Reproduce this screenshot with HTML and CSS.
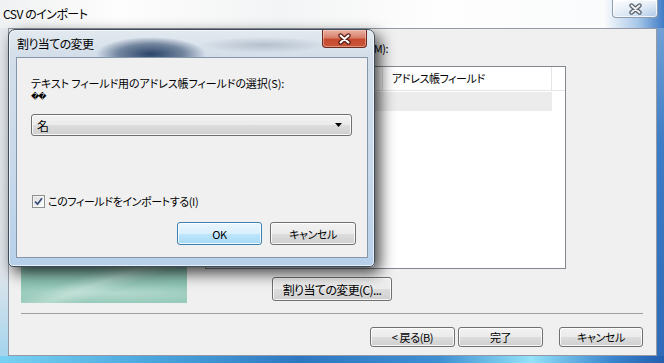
FILE: index.html
```html
<!DOCTYPE html>
<html lang="ja">
<head>
    <meta charset="UTF-8">
    <meta name="viewport" content="width=device-width, initial-scale=1.0">
    <title>CSV のインポート</title>
    <link rel="stylesheet" href="styles.css">
</head>
<body>
    <div class="window">
        <div class="titlebar">
            <span class="title">CSV のインポート</span>
            <div class="caption-close">
                <svg width="15" height="12" viewBox="0 0 15 12">
                    <path d="M3.5 2.5L11.5 9.5M11.5 2.5L3.5 9.5" stroke="#59606a" stroke-width="4.4" stroke-linecap="round"/>
                    <path d="M3.5 2.5L11.5 9.5M11.5 2.5L3.5 9.5" stroke="#eef0f2" stroke-width="2" stroke-linecap="round"/>
                </svg>
            </div>
        </div>

        <div class="client">
            <div class="wizard-body">
                <div class="side-art"></div>
                <div class="map-pane">
                    <div class="map-label">テキスト フィールドの割り当ての設定(M):</div>
                    <div class="listview">
                        <div class="lv-header">
                            <div class="lv-col col-text"></div>
                            <div class="lv-col col-field">アドレス帳フィールド</div>
                            <div class="lv-col col-fill"></div>
                        </div>
                        <div class="lv-row selected">
                            <div class="lv-cell col-text"></div>
                            <div class="lv-cell col-field"></div>
                        </div>
                    </div>
                    <div class="map-actions">
                        <button class="btn map-btn">割り当ての変更(C)...</button>
                    </div>
                </div>
            </div>

            <div class="separator"></div>

            <div class="wizard-buttons">
                <button class="btn wiz">&lt; 戻る(B)</button>
                <button class="btn wiz">完了</button>
                <button class="btn wiz cancel">キャンセル</button>
            </div>
        </div>

        <!-- modal dialog on top of the wizard -->
        <div class="dialog">
            <div class="dialog-titlebar">
                <span class="dialog-title">割り当ての変更</span>
                <div class="dialog-close">
                    <svg width="15" height="12" viewBox="0 0 15 12">
                        <path d="M3.5 2.5L11.5 9.5M11.5 2.5L3.5 9.5" stroke="#5a1c12" stroke-width="4.4" stroke-linecap="round"/>
                        <path d="M3.5 2.5L11.5 9.5M11.5 2.5L3.5 9.5" stroke="#ffffff" stroke-width="2" stroke-linecap="round"/>
                    </svg>
                </div>
            </div>
            <div class="dialog-client">
                <div class="prompt">テキスト フィールド用のアドレス帳フィールドの選択(S):</div>
                <div class="source-name">��</div>
                <div class="combo">
                    <span>名</span>
                    <svg width="7" height="4" viewBox="0 0 7 4"><path d="M0 0H7L3.5 4Z" fill="#000"/></svg>
                </div>
                <div class="check-row">
                    <span class="checkbox">
                        <svg width="11" height="11" viewBox="0 0 11 11">
                            <path d="M2 5.5L4.5 8.2L9 2.2" fill="none" stroke="#3b4f7a" stroke-width="1.8"/>
                        </svg>
                    </span>
                    <span>このフィールドをインポートする(I)</span>
                </div>
                <div class="dialog-buttons">
                    <button class="btn default">OK</button>
                    <button class="btn">キャンセル</button>
                </div>
            </div>
        </div>
    </div>
</body>
</html>
```

FILE: styles.css
```css
* {
    margin: 0;
    padding: 0;
    box-sizing: border-box;
}

body {
    font-family: "Noto Sans CJK JP", "Liberation Sans", sans-serif;
    font-size: 11px;
    letter-spacing: -0.4px;
    font-feature-settings: "palt";
    color: #000;
    overflow: hidden;
}

.window {
    position: relative;
    width: 664px;
    height: 363px;
    display: flex;
    flex-direction: column;
    padding: 0 7px 7px 8px;
    background:
        linear-gradient(to right, #79d2f2 0%, #4ba8df 22%, #2e78c2 45%, #3d8fd2 66%, #93e2f8 80%, #3b86cf 92%, #225fae 100%) bottom / 100% 7px no-repeat,
        linear-gradient(to bottom, #e7ebef 0%, #dfe5eb 75%, #9fd3ee 100%) left / 8px 100% no-repeat,
        linear-gradient(to bottom, #7da8d8 0%, #3d7cc6 40%, #2f6bb8 100%);
}

/* ---------- main window caption ---------- */

.titlebar {
    height: 28px;
    margin: 0 -7px 0 -8px;
    padding: 0 6px 0 3px;
    display: flex;
    justify-content: space-between;
    align-items: center;
    background: linear-gradient(to right, #f0f1f2 0%, #fdfdfd 18%, #f3f4f5 42%, #fefefe 66%, #fafbfc 91%, #a9c8ea 96%, #3f7cc6 100%);
}

.title {
    font-size: 12px;
    letter-spacing: -0.5px;
    line-height: 14px;
}

.caption-close {
    align-self: flex-start;
    width: 46px;
    height: 18px;
    display: flex;
    justify-content: center;
    align-items: center;
    border: 1px solid #8f9cab;
    border-top: none;
    border-radius: 0 0 4px 4px;
    background: linear-gradient(to bottom, rgba(255, 255, 255, 0.9), rgba(225, 234, 244, 0.6));
    box-shadow: inset 0 0 0 1px rgba(255, 255, 255, 0.7);
}

/* ---------- wizard client area ---------- */

.client {
    flex: 1;
    display: flex;
    flex-direction: column;
    background: #f0f0f0;
    border: 1px solid #939aa3;
    padding: 12px 13px 0 12px;
}

.wizard-body {
    display: flex;
    gap: 18px;
}

.side-art {
    width: 166px;
    height: 262px;
    background:
        radial-gradient(ellipse 120px 10px at 90px 252px, rgba(255, 255, 255, 0.3), rgba(255, 255, 255, 0)),
        linear-gradient(160deg, rgba(255, 255, 255, 0) 80%, rgba(255, 255, 255, 0.28) 84%, rgba(255, 255, 255, 0) 88%),
        linear-gradient(to bottom, #76b0a1 0%, #86bfae 84%, #98cbbb 100%);
}

.map-pane {
    width: 361px;
    display: flex;
    flex-direction: column;
}

.map-label {
    height: 14px;
    line-height: 14px;
    white-space: nowrap;
}

.listview {
    margin-top: 11px;
    height: 203px;
    background: #fff;
    border: 1px solid #828790;
}

.lv-header {
    display: flex;
    height: 24px;
    border-bottom: 1px solid #e5e5e5;
}

.lv-col {
    line-height: 23px;
    padding-left: 9px;
    border-right: 1px solid #e5e5e5;
    white-space: nowrap;
}

.col-text {
    width: 177px;
}

.col-field {
    width: 169px;
}

.col-fill {
    flex: 1;
    border-right: none;
}

.lv-row {
    display: flex;
    height: 19px;
    margin-top: 1px;
    width: 346px;
}

.lv-row.selected {
    background: #ececec;
}

.lv-cell {
    line-height: 19px;
    padding-left: 6px;
}

.map-actions {
    margin-top: 8px;
    padding-left: 67px;
}

/* ---------- buttons ---------- */

.btn {
    font: inherit;
    letter-spacing: inherit;
    font-feature-settings: "palt";
    color: #000;
    height: 23px;
    border: 1px solid #707070;
    border-radius: 3px;
    background: linear-gradient(to bottom, #f2f2f2 0%, #ebebeb 50%, #dddddd 51%, #cfcfcf 100%);
    box-shadow: inset 0 0 0 1px rgba(255, 255, 255, 0.8);
}

.btn.default {
    border-color: #3c7fb1;
    background: linear-gradient(to bottom, #eaf6fd 0%, #d9f0fc 50%, #bee6fd 51%, #a7d9f5 100%);
}

.map-btn {
    width: 120px;
    height: 24px;
    font-size: 12px;
    letter-spacing: -0.6px;
}

.separator {
    margin-top: 10px;
    height: 1px;
    background: #a0a0a0;
}

.wizard-buttons {
    margin-top: 13px;
    display: flex;
    justify-content: flex-end;
    gap: 3px;
}

.btn.wiz {
    width: 85px;
    height: 20px;
}

.btn.wiz.cancel {
    margin-left: 13px;
    width: 84px;
}

/* ---------- change mapping dialog ---------- */

.dialog {
    position: absolute;
    left: 8px;
    top: 29px;
    width: 367px;
    height: 238px;
    display: flex;
    flex-direction: column;
    border: 1px solid #3e4c5c;
    border-radius: 7px 7px 5px 5px;
    background:
        radial-gradient(ellipse 55px 17px at 142px 24px, rgba(34, 60, 98, 0.95), rgba(34, 60, 98, 0.55) 60%, rgba(34, 60, 98, 0)),
        radial-gradient(ellipse 65px 8px at 255px 15px, rgba(110, 125, 145, 0.35), rgba(110, 125, 145, 0)),
        linear-gradient(to bottom, #e3e9ef 0%, #d3deea 26px, #c8d9eb 60%, #b7d0ea 100%);
    box-shadow:
        inset 0 0 0 1px rgba(255, 255, 255, 0.65),
        5px 6px 15px rgba(0, 0, 0, 0.75);
}

.dialog-titlebar {
    height: 27px;
    display: flex;
    justify-content: space-between;
    align-items: center;
    padding: 0 7px 0 8px;
}

.dialog-title {
    font-size: 12px;
    letter-spacing: -0.6px;
    line-height: 14px;
}

.dialog-close {
    align-self: flex-start;
    width: 45px;
    height: 18px;
    display: flex;
    justify-content: center;
    align-items: center;
    border: 1px solid #6d2a1e;
    border-top: none;
    border-radius: 0 0 4px 4px;
    background: linear-gradient(to bottom, #eab2a3 0%, #d9806b 45%, #c74a2f 55%, #c9573a 100%);
    box-shadow: inset 0 0 0 1px rgba(255, 220, 210, 0.45);
}

.dialog-client {
    flex: 1;
    margin: 0 6px 8px 7px;
    background: #f0f0f0;
    border: 1px solid #8496aa;
    display: flex;
    flex-direction: column;
    padding: 19px 11px 12px 14px;
}

.prompt {
    line-height: 13px;
    letter-spacing: -0.1px;
    white-space: nowrap;
}

.source-name {
    font-family: "DejaVu Sans", sans-serif;
    font-size: 8px;
    line-height: 13px;
    letter-spacing: -1px;
}

.combo {
    margin-top: 11px;
    margin-right: 4px;
    height: 22px;
    display: flex;
    justify-content: space-between;
    align-items: center;
    padding: 0 9px 0 5px;
    font-size: 12px;
    border: 1px solid #707070;
    border-radius: 3px;
    background: linear-gradient(to bottom, #f2f2f2 0%, #ebebeb 50%, #dddddd 51%, #cfcfcf 100%);
    box-shadow: inset 0 0 0 1px rgba(255, 255, 255, 0.8);
}

.check-row {
    margin-top: auto;
    height: 13px;
    display: flex;
    align-items: center;
    gap: 3px;
    padding-left: 1px;
    line-height: 13px;
}

.checkbox {
    width: 13px;
    height: 13px;
    display: flex;
    justify-content: center;
    align-items: center;
    border: 1px solid #8e8f8f;
    background: linear-gradient(135deg, #dcdcdc 0%, #f4f4f4 70%, #fdfdfd 100%);
    box-shadow: inset 0 0 0 1px rgba(255, 255, 255, 0.6);
}

.dialog-buttons {
    margin-top: 14px;
    display: flex;
    justify-content: flex-end;
    gap: 8px;
}

.dialog-buttons .btn {
    width: 85px;
}

.dialog-buttons .btn + .btn {
    width: 86px;
}
```
